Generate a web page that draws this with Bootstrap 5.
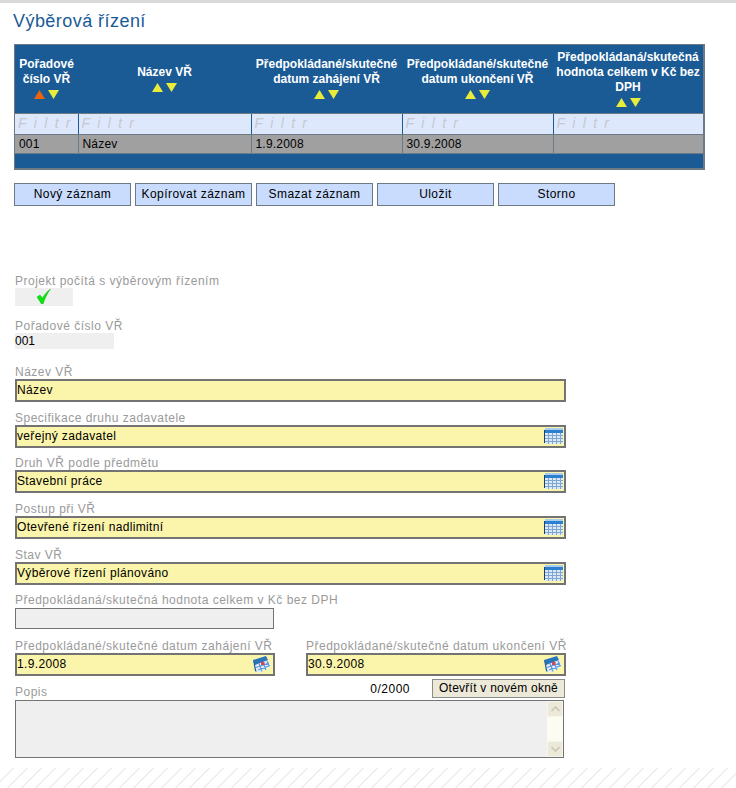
<!DOCTYPE html>
<html lang="cs">
<head>
<meta charset="utf-8">
<title>Výběrová řízení</title>
<link href="https://cdn.jsdelivr.net/npm/bootstrap@5.3.0/dist/css/bootstrap.min.css" rel="stylesheet">
<style>
html,body{height:788px;overflow:hidden;background:#fff}
body{font-family:"Liberation Sans",Arial,sans-serif;font-size:12px;color:#000;line-height:14px;letter-spacing:.5px}
.topstrip{height:3px;background:#d9d9d9}
.pagewrap{height:765px;padding:0 0 0 14px;overflow:hidden}
.pagetitle{font-family:"Liberation Sans",Arial,sans-serif;font-size:18px;line-height:22px;font-weight:400;color:#1a5b96;margin:7px 0 12px -1px;letter-spacing:.45px}
.gridbox{width:691px;background:#1a5b96;border:1px solid #6c7a86;border-width:1px 2px 2px 1px}
.gridtbl{width:100%;table-layout:fixed;border-collapse:collapse}
.c1{width:63px}.c2{width:173px}.c3{width:151px}.c4{width:151px}
.gridtbl th{height:68px;padding:2px 2px 0 2px;text-align:center;color:#fff;font-weight:700;font-size:12px;line-height:15px;letter-spacing:0;vertical-align:middle;white-space:normal}
.sortpair{display:flex;justify-content:center;gap:3px;height:15px;align-items:center}
.filtrow td{height:21px;padding:0;background:#dde8fd;border-left:1px solid #1a5b96;border-top:1px solid #6c7a86;border-bottom:1px solid #6c7a86}
.filtrow td:first-child{border-left:0}
.filtinp{display:block;width:100%;height:19px;border:0;background:transparent;padding:0 0 0 3px;font:italic 14px/19px "Liberation Sans",Arial,sans-serif;letter-spacing:7.3px;outline:0}
.filtinp::placeholder{color:#c6c9cf;opacity:1}
.rowdata td{height:19px;padding:0 4px;background:#a0a0a0;border-left:1px solid #6c7a86;border-bottom:1px solid #6c7a86;letter-spacing:.2px;font-size:12px}
.rowdata td:first-child{border-left:0}
.gridfoot{height:14px}
.actbar{margin-top:13px;height:23px;gap:4px}
.actbtn{height:23px;width:117px;padding:0;border:1px solid #6c7a86;border-radius:0;background:#c9dcfd;color:#000;font-size:12px;line-height:20px;letter-spacing:.45px;font-family:inherit}
.formzone{margin-left:1px;width:551px}
.flabel{display:block;height:15px;line-height:16px;margin:0;color:#9a9a9a;white-space:nowrap}
.roflag{width:58px;height:18px;background:#efefef;display:flex;justify-content:center;align-items:center}
.rotext{width:99px;height:16px;background:#efefef;line-height:16px;letter-spacing:0}
.edit{height:23px;background:#fbf4ab;border:2px solid #737373;display:flex;align-items:center;justify-content:space-between;line-height:16px}
.edit input{flex:1;min-width:0;height:100%;border:0;background:transparent;padding:0;outline:0;font:12px "Liberation Sans",Arial,sans-serif;letter-spacing:.35px;color:#000}
.edit svg{flex:none;margin-right:1px}
.rofield{width:259px;height:21px;background:#efefef;border:1px solid #737373;margin-top:1px}
.g1{margin-top:67px}.g2{margin-top:12px}.g3{margin-top:15px}.g4{margin-top:8px}.g5{margin-top:7px}.g6{margin-top:9px}
.datecols{gap:31px;width:551px}
.datecol{width:260px}
.popis-head{height:21px;margin-top:3px}
.popis-head .flabel{margin-top:5px}
.cnt{margin-left:auto;margin-right:22px;margin-top:3px;letter-spacing:.5px;line-height:14px}
.newwin{width:133px;height:19px;padding:0;border:1px solid #8b8b8b;border-radius:0;background:#ece9d8;color:#000;font:12px/17px "Liberation Sans",Arial,sans-serif;letter-spacing:.25px;margin-right:1px}
.memo{width:549px;height:58px;border:1px solid #737373;background:#efefef}
.memo textarea{flex:1;border:0;background:transparent;resize:none;outline:0;padding:0}
.fakescroll{width:16px;background:#fdfcf2;display:flex;flex-direction:column;justify-content:space-between}
.fakescroll span{height:16px;background:#ece9d8;border:1px solid #f6f5ec;border-radius:2px;display:flex;align-items:center;justify-content:center}
.hatch{height:20px;background:repeating-linear-gradient(135deg,#fff 0,#fff 8.6px,#ededea 8.6px,#ededea 9.9px)}
</style>
</head>
<body>
<svg width="0" height="0" class="position-absolute">
  <defs>
    <symbol id="arrup" viewBox="0 0 11 9"><path d="M5.500 0 11 9H0z"/></symbol>
    <symbol id="arrdn" viewBox="0 0 11 9"><path d="M0 0h11L5.500 9z"/></symbol>
    <symbol id="tblpick" viewBox="0 0 19 16"><rect x="0" y="2" width="1" height="13" fill="#1e3f66"/><rect x="1" y="0" width="18" height="16" fill="#dbe8f6"/><rect x="1" y="0" width="18" height="2" fill="#a8cdf0"/><rect x="1" y="2" width="18" height="3" fill="#2b80cf"/><path d="M1 7.500h18M1 10.500h18M1 13.500h18M4.500 5v11M8.500 5v11M12.500 5v11M16.500 5v11" stroke="#7fa6d0" stroke-width="1"/></symbol>
    <symbol id="calpick" viewBox="0 0 20 17"><path d="M1 4 14 0 16 4 19 10 7 17 3 15z" fill="#e3edf8"/><path d="M1 4 14 0 16 4 3 9z" fill="#2b74b5"/><path d="M1 4 3 15 4.500 16 2.500 6z" fill="#1f5c94"/><path d="M4 11.500 17 7M6 14 18 9.500M7 7.500l3 8M11 6l3 8M15 5l2 5" stroke="#5a9ad8" stroke-width="1.100" fill="none"/><rect x="9" y="6" width="3.500" height="3" fill="#d8455a"/></symbol>
  </defs>
</svg>
<div class="topstrip"></div>
<div class="pagewrap">
  <h1 class="pagetitle">Výběrová řízení</h1>
  <div class="gridbox">
    <table class="gridtbl">
      <colgroup><col class="c1"><col class="c2"><col class="c3"><col class="c4"><col></colgroup>
      <thead>
      <tr>
        <th>Pořadové číslo VŘ<div class="sortpair"><svg width="11" height="9" fill="#e8650c"><use href="#arrup"/></svg><svg width="11" height="9" fill="#eaec3c"><use href="#arrdn"/></svg></div></th>
        <th>Název VŘ<div class="sortpair"><svg width="11" height="9" fill="#eaec3c"><use href="#arrup"/></svg><svg width="11" height="9" fill="#eaec3c"><use href="#arrdn"/></svg></div></th>
        <th>Předpokládané/skutečné datum zahájení VŘ<div class="sortpair"><svg width="11" height="9" fill="#eaec3c"><use href="#arrup"/></svg><svg width="11" height="9" fill="#eaec3c"><use href="#arrdn"/></svg></div></th>
        <th>Předpokládané/skutečné datum ukončení VŘ<div class="sortpair"><svg width="11" height="9" fill="#eaec3c"><use href="#arrup"/></svg><svg width="11" height="9" fill="#eaec3c"><use href="#arrdn"/></svg></div></th>
        <th>Předpokládaná/skutečná hodnota celkem v Kč bez DPH<div class="sortpair"><svg width="11" height="9" fill="#eaec3c"><use href="#arrup"/></svg><svg width="11" height="9" fill="#eaec3c"><use href="#arrdn"/></svg></div></th>
      </tr>
      </thead>
      <tbody>
      <tr class="filtrow"><td><input class="filtinp" placeholder="Filtr"></td><td><input class="filtinp" placeholder="Filtr"></td><td><input class="filtinp" placeholder="Filtr"></td><td><input class="filtinp" placeholder="Filtr"></td><td><input class="filtinp" placeholder="Filtr"></td></tr>
      <tr class="rowdata"><td>001</td><td>Název</td><td>1.9.2008</td><td>30.9.2008</td><td></td></tr>
      </tbody>
    </table>
    <div class="gridfoot"></div>
  </div>
  <div class="d-flex actbar">
    <button type="button" class="btn actbtn">Nový záznam</button>
    <button type="button" class="btn actbtn">Kopírovat záznam</button>
    <button type="button" class="btn actbtn">Smazat záznam</button>
    <button type="button" class="btn actbtn">Uložit</button>
    <button type="button" class="btn actbtn">Storno</button>
  </div>
  <div class="formzone">
    <div class="g1"><label class="flabel">Projekt počítá s výběrovým řízením</label>
      <div class="roflag"><svg width="14" height="15" viewBox="0 0 14 15"><path d="M0 8 3 6 5.500 9C7.500 5.500 10 2.500 13.500 0 10.500 4 8 9 6 15H4.500z" fill="#0ae60a" stroke="#0aa70f" stroke-width=".4"/></svg></div></div>
    <div class="g2"><label class="flabel">Pořadové číslo VŘ</label><div class="rotext">001</div></div>
    <div class="g3"><label class="flabel">Název VŘ</label><div class="edit"><input value="Název"></div></div>
    <div class="g4"><label class="flabel">Specifikace druhu zadavatele</label><div class="edit"><input value="veřejný zadavatel"><svg width="19" height="16"><use href="#tblpick"/></svg></div></div>
    <div class="g5"><label class="flabel">Druh VŘ podle předmětu</label><div class="edit"><input value="Stavební práce"><svg width="19" height="16"><use href="#tblpick"/></svg></div></div>
    <div class="g4"><label class="flabel">Postup při VŘ</label><div class="edit"><input value="Otevřené řízení nadlimitní"><svg width="19" height="16"><use href="#tblpick"/></svg></div></div>
    <div class="g4"><label class="flabel">Stav VŘ</label><div class="edit"><input value="Výběrové řízení plánováno"><svg width="19" height="16"><use href="#tblpick"/></svg></div></div>
    <div class="g5"><label class="flabel">Předpokládaná/skutečná hodnota celkem v Kč bez DPH</label><div class="rofield"></div></div>
    <div class="d-flex datecols g6">
      <div class="datecol"><label class="flabel">Předpokládané/skutečné datum zahájení VŘ</label><div class="edit"><input value="1.9.2008"><svg width="20" height="17"><use href="#calpick"/></svg></div></div>
      <div class="datecol"><label class="flabel">Předpokládané/skutečné datum ukončení VŘ</label><div class="edit"><input value="30.9.2008"><svg width="20" height="17"><use href="#calpick"/></svg></div></div>
    </div>
    <div class="d-flex popis-head"><label class="flabel">Popis</label><span class="cnt">0/2000</span><button type="button" class="btn newwin">Otevřít v novém okně</button></div>
    <div class="d-flex memo"><textarea aria-label="Popis"></textarea>
      <div class="fakescroll"><span><svg width="9" height="6"><path d="M.5 5 4.500 1l4 4" fill="none" stroke="#c6c5b6" stroke-width="1.500"/></svg></span><span><svg width="9" height="6"><path d="M.5 1l4 4 4-4" fill="none" stroke="#c6c5b6" stroke-width="1.500"/></svg></span></div>
    </div>
  </div>
</div>
<div class="hatch"></div>
</body>
</html>
